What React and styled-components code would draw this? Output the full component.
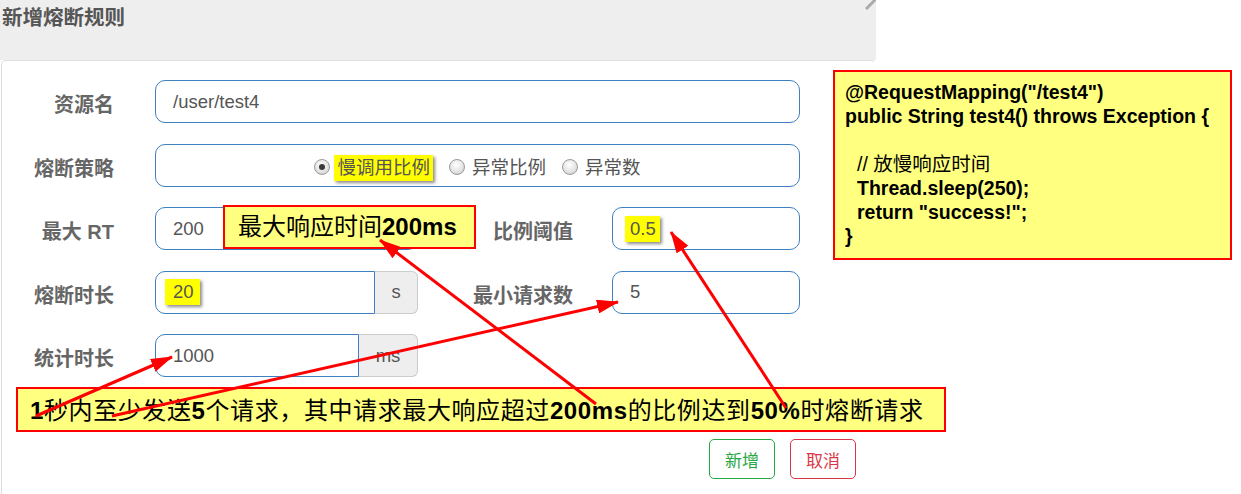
import React from "react";
import styled, { createGlobalStyle, css } from "styled-components";

const sans = `"Liberation Sans", "Noto Sans CJK SC", Arial, sans-serif`;

const GlobalStyle = createGlobalStyle`
  html, body {
    margin: 0;
    padding: 0;
    background: #fff;
  }
  body {
    font-family: ${sans};
  }
`;

const Page = styled.div`
  position: relative;
  width: 1241px;
  height: 494px;
  overflow: hidden;
  background: #fff;
`;

const Dialog = styled.div`
  width: 876px;
`;

const Header = styled.div`
  position: relative;
  height: 60px;
  box-sizing: border-box;
  padding: 5px 0 0 2px;
  background: #eee;
`;

const Title = styled.h4`
  margin: 0;
  font-size: 20.5px;
  line-height: 26px;
  font-weight: 700;
  color: #555;
`;

const CloseMark = styled.svg`
  position: absolute;
  right: 0;
  top: 0;
`;

const Panel = styled.div`
  margin-left: 1px;
  height: 440px;
  box-sizing: border-box;
  padding-top: 19px;
  background: #fff;
  border: 1px solid #ddd;
  border-right-color: transparent;
  border-radius: 5px;
`;

const Form = styled.div`
  display: flex;
  flex-direction: column;
  gap: 20.5px;
`;

const Row = styled.div`
  display: flex;
  align-items: center;
  height: 43px;
`;

const Label = styled.label`
  flex-shrink: 0;
  width: ${(p) => p.$w || 112}px;
  margin-right: ${(p) => p.$gap || 41}px;
  padding-top: 7px;
  text-align: right;
  font-size: 20px;
  line-height: 24px;
  font-weight: 700;
  color: #666;
`;

const Field = styled.div`
  position: relative;
  display: flex;
  width: ${(p) => p.$w}px;
  height: 100%;
`;

const Input = styled.div`
  flex: 1;
  display: flex;
  align-items: center;
  justify-content: ${(p) => (p.$center ? "center" : "flex-start")};
  box-sizing: border-box;
  padding-left: ${(p) => (p.$center ? 0 : 17)}px;
  border: 1px solid #3f80c2;
  border-radius: ${(p) => (p.$joined ? "10px 0 0 10px" : "10px")};
  font-size: 18.5px;
  line-height: 24px;
  color: #555;
`;

const Addon = styled.span`
  width: ${(p) => p.$w}px;
  display: flex;
  align-items: center;
  justify-content: center;
  box-sizing: border-box;
  background: #eee;
  border: 1px solid #ccc;
  border-left: none;
  border-radius: 0 6px 6px 0;
  font-size: 18.5px;
  color: #555;
`;

const Hl = styled.span`
  background: #ffff00;
  box-shadow: 2px 2px 3px rgba(0, 0, 0, 0.45);
  padding: 1px ${(p) => p.$r || 4}px 1px ${(p) => p.$l || 4}px;
  margin-left: -${(p) => p.$l || 4}px;
`;

const RadioGroup = styled.div`
  display: flex;
  align-items: center;
  gap: 16px;
  padding-top: 5px;
`;

const Option = styled.span`
  display: inline-flex;
  align-items: center;
  gap: 7px;
  font-size: 18.5px;
  line-height: 24px;
  color: #555;
`;

const Radio = styled.span`
  position: relative;
  width: 16px;
  height: 16px;
  margin-top: -2px;
  box-sizing: border-box;
  border-radius: 50%;
  border: 1px solid #9a9a9a;
  background: radial-gradient(circle at 45% 35%, #fff 0%, #e4e4e4 55%, #c8c8c8 100%);
  ${(p) =>
    p.$on &&
    css`
      &::after {
        content: "";
        position: absolute;
        left: 4px;
        top: 4px;
        width: 6px;
        height: 6px;
        border-radius: 50%;
        background: #3a3a3a;
      }
    `}
`;

const Callout = styled.div`
  position: absolute;
  left: 68px;
  top: -2px;
  width: 253px;
  height: 44px;
  box-sizing: border-box;
  display: flex;
  align-items: center;
  padding-left: 13px;
  background: #ffff80;
  border: 2px solid #f00;
  font-size: 24px;
  line-height: 28px;
  color: #000;
  white-space: nowrap;
`;

const Note = styled.div`
  margin: 10px 0 0 14px;
  width: 930px;
  height: 45px;
  box-sizing: border-box;
  display: flex;
  align-items: center;
  padding: 2px 0 0 12px;
  background: #ffff80;
  border: 2px solid #f00;
  font-size: 24px;
  line-height: 28px;
  letter-spacing: 0.6px;
  color: #000;
  white-space: nowrap;
`;

const Actions = styled.div`
  display: flex;
  justify-content: flex-end;
  gap: 15px;
  margin: 7px 19px 0 0;
`;

const Btn = styled.button`
  width: 66px;
  height: 40px;
  padding: 0;
  background: #fff;
  border: 1px solid ${(p) => p.$c};
  border-radius: 5px;
  color: ${(p) => p.$c};
  font-family: ${sans};
  font-size: 17px;
`;

const Code = styled.div`
  position: absolute;
  left: 833px;
  top: 70px;
  width: 399px;
  height: 190px;
  box-sizing: border-box;
  padding: 8px 0 0 10px;
  background: #ffff80;
  border: 2px solid #f00;
  font-size: 19.5px;
  line-height: 24px;
  font-weight: 700;
  color: #000;
  white-space: pre;
`;

const CodeLine = styled.div`
  padding-left: ${(p) => (p.$indent ? 12 : 0)}px;
  font-weight: ${(p) => (p.$thin ? 400 : 700)};
`;

const Arrows = styled.svg`
  position: absolute;
  left: 0;
  top: 0;
  pointer-events: none;
`;

const arrows = [
  [36, 416, 172, 357],
  [112, 416, 618, 302],
  [596, 404, 380, 240],
  [786, 408, 671, 232],
];

export default function App() {
  return (
    <Page>
      <GlobalStyle />
      <Dialog>
        <Header>
          <Title>新增熔断规则</Title>
          <CloseMark width="11" height="10" viewBox="0 0 11 10">
            <path d="M1 9 L11 -1" stroke="#aaa" strokeWidth="3" />
          </CloseMark>
        </Header>
        <Panel>
          <Form>
            <Row>
              <Label>资源名</Label>
              <Field $w={645}>
                <Input>/user/test4</Input>
              </Field>
            </Row>
            <Row>
              <Label>熔断策略</Label>
              <Field $w={645}>
                <Input $center>
                  <RadioGroup>
                    <Option>
                      <Radio $on />
                      <Hl $l={3} $r={3}>慢调用比例</Hl>
                    </Option>
                    <Option>
                      <Radio />
                      异常比例
                    </Option>
                    <Option>
                      <Radio />
                      异常数
                    </Option>
                  </RadioGroup>
                </Input>
              </Field>
            </Row>
            <Row>
              <Label>最大 RT</Label>
              <Field $w={263}>
                <Input>200</Input>
                <Callout>
                  最大响应时间<b>200ms</b>
                </Callout>
              </Field>
              <Label $w={155} $gap={39}>
                比例阈值
              </Label>
              <Field $w={188}>
                <Input>
                  <Hl $l={5} $r={4}>0.5</Hl>
                </Input>
              </Field>
            </Row>
            <Row>
              <Label>熔断时长</Label>
              <Field $w={263}>
                <Input $joined>
                  <Hl $l={8} $r={6}>20</Hl>
                </Input>
                <Addon $w={43}>s</Addon>
              </Field>
              <Label $w={155} $gap={39}>
                最小请求数
              </Label>
              <Field $w={188}>
                <Input>5</Input>
              </Field>
            </Row>
            <Row>
              <Label>统计时长</Label>
              <Field $w={263}>
                <Input $joined>1000</Input>
                <Addon $w={59}>ms</Addon>
              </Field>
            </Row>
          </Form>
          <Note>
            <b>1</b>秒内至少发送<b>5</b>个请求，其中请求最大响应超过<b>200ms</b>的比例达到
            <b>50%</b>时熔断请求
          </Note>
          <Actions>
            <Btn $c="#28a745">新增</Btn>
            <Btn $c="#dc3545">取消</Btn>
          </Actions>
        </Panel>
      </Dialog>

      <Code>
        <CodeLine>@RequestMapping("/test4")</CodeLine>
        <CodeLine>public String test4() throws Exception {"{"}</CodeLine>
        <CodeLine> </CodeLine>
        <CodeLine $indent $thin>
          // 放慢响应时间
        </CodeLine>
        <CodeLine $indent>Thread.sleep(250);</CodeLine>
        <CodeLine $indent>return "success!";</CodeLine>
        <CodeLine>{"}"}</CodeLine>
      </Code>

      <Arrows width="1241" height="494" viewBox="0 0 1241 494">
        <defs>
          <marker
            id="head"
            markerUnits="userSpaceOnUse"
            markerWidth="22"
            markerHeight="14"
            refX="21"
            refY="7"
            orient="auto"
          >
            <path d="M0 0 L22 7 L0 14 Z" fill="#f00" />
          </marker>
        </defs>
        {arrows.map(([x1, y1, x2, y2], i) => (
          <line
            key={i}
            x1={x1}
            y1={y1}
            x2={x2}
            y2={y2}
            stroke="#f00"
            strokeWidth="3"
            markerEnd="url(#head)"
          />
        ))}
      </Arrows>
    </Page>
  );
}
